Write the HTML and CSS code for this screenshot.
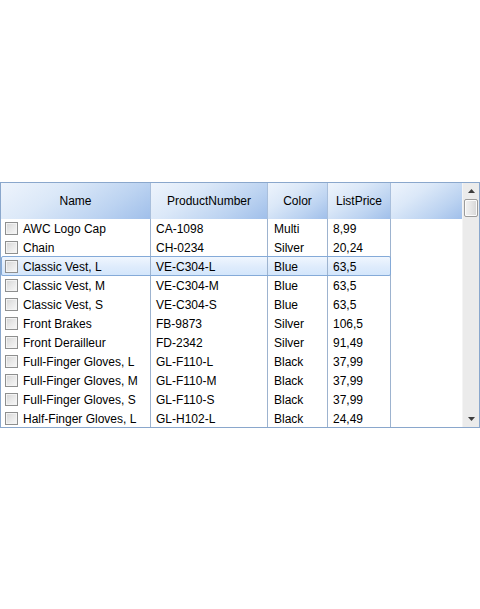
FILE: index.html
```html
<!DOCTYPE html>
<html>
<head>
<meta charset="utf-8">
<link rel="stylesheet" href="styles.css">
</head>
<body>
<div class="grid">
  <div class="main">
    <div class="header">
      <div class="hcell c1">Name</div>
      <div class="hcell c2">ProductNumber</div>
      <div class="hcell c3">Color</div>
      <div class="hcell c4">ListPrice</div>
      <div class="hcell hfill"></div>
    </div>
    <div class="body">
      <div class="rows">
        <div class="row"><div class="cell c1"><span class="cb"></span>AWC Logo Cap</div><div class="cell c2">CA-1098</div><div class="cell c3">Multi</div><div class="cell c4">8,99</div></div>
        <div class="row"><div class="cell c1"><span class="cb"></span>Chain</div><div class="cell c2">CH-0234</div><div class="cell c3">Silver</div><div class="cell c4">20,24</div></div>
        <div class="row sel"><div class="cell c1"><span class="cb"></span>Classic Vest, L</div><div class="cell c2">VE-C304-L</div><div class="cell c3">Blue</div><div class="cell c4">63,5</div></div>
        <div class="row"><div class="cell c1"><span class="cb"></span>Classic Vest, M</div><div class="cell c2">VE-C304-M</div><div class="cell c3">Blue</div><div class="cell c4">63,5</div></div>
        <div class="row"><div class="cell c1"><span class="cb"></span>Classic Vest, S</div><div class="cell c2">VE-C304-S</div><div class="cell c3">Blue</div><div class="cell c4">63,5</div></div>
        <div class="row"><div class="cell c1"><span class="cb"></span>Front Brakes</div><div class="cell c2">FB-9873</div><div class="cell c3">Silver</div><div class="cell c4">106,5</div></div>
        <div class="row"><div class="cell c1"><span class="cb"></span>Front Derailleur</div><div class="cell c2">FD-2342</div><div class="cell c3">Silver</div><div class="cell c4">91,49</div></div>
        <div class="row"><div class="cell c1"><span class="cb"></span>Full-Finger Gloves, L</div><div class="cell c2">GL-F110-L</div><div class="cell c3">Black</div><div class="cell c4">37,99</div></div>
        <div class="row"><div class="cell c1"><span class="cb"></span>Full-Finger Gloves, M</div><div class="cell c2">GL-F110-M</div><div class="cell c3">Black</div><div class="cell c4">37,99</div></div>
        <div class="row"><div class="cell c1"><span class="cb"></span>Full-Finger Gloves, S</div><div class="cell c2">GL-F110-S</div><div class="cell c3">Black</div><div class="cell c4">37,99</div></div>
        <div class="row"><div class="cell c1"><span class="cb"></span>Half-Finger Gloves, L</div><div class="cell c2">GL-H102-L</div><div class="cell c3">Black</div><div class="cell c4">24,49</div></div>
      </div>
      <div class="bfill"></div>
    </div>
  </div>
  <div class="scroll">
    <div class="sbtn"><svg width="7" height="4" viewBox="0 0 7 4"><path d="M0 4 L3.5 0 L7 4 Z" fill="#3c3c3c"/></svg></div>
    <div class="track"><div class="thumb"></div></div>
    <div class="sbtn"><svg width="7" height="4" viewBox="0 0 7 4"><path d="M0 0 L7 0 L3.5 4 Z" fill="#3c3c3c"/></svg></div>
  </div>
</div>
</body>
</html>
```
FILE: styles.css
```css
html, body {
  margin: 0;
  padding: 0;
  background: #ffffff;
}
body {
  padding-top: 182px;
  font-family: "Liberation Sans", Arial, sans-serif;
  font-size: 12px;
  color: #000000;
}
.grid {
  width: 480px;
  height: 246px;
  box-sizing: border-box;
  border: 1px solid #8aa7cc;
  display: flex;
  overflow: hidden;
}
.main {
  flex: 1;
  display: flex;
  flex-direction: column;
  min-width: 0;
}
.header {
  display: flex;
  height: 36px;
  flex: none;
}
.hcell {
  box-sizing: border-box;
  border-right: 1px solid #a9bfdc;
  background: linear-gradient(145deg, #eef4fc 0%, #dbe8f8 35%, #bcd3f1 72%, #a0bfea 100%);
  display: flex;
  align-items: center;
  justify-content: center;
  padding-bottom: 1px;
}
.hfill {
  flex: 1;
  border-right: none;
}
.c1 { width: 150px; }
.c2 { width: 117px; }
.c3 { width: 60px; }
.c4 { width: 63px; }
.body {
  flex: 1;
  display: flex;
  overflow: hidden;
}
.rows {
  width: 390px;
  flex: none;
}
.bfill {
  flex: 1;
  background: #ffffff;
}
.row {
  display: flex;
  height: 19px;
  position: relative;
}
.cell {
  box-sizing: border-box;
  border-right: 1px solid #9db3cf;
  display: flex;
  align-items: center;
  padding-left: 5px;
  white-space: nowrap;
  overflow: hidden;
  position: relative;
  z-index: 1;
}
.cell.c1 { padding-left: 4px; }
.cell.c3 { padding-left: 6px; }
.cb {
  width: 13px;
  height: 13px;
  box-sizing: border-box;
  border: 1px solid #8e8f8f;
  background: linear-gradient(135deg, #d4d4d4 0%, #e8e8e8 50%, #f8f8f8 100%);
  box-shadow: inset 0 0 0 1px #f3f3f3;
  margin-right: 5px;
  flex: none;
}
.row.sel {
  background: linear-gradient(to bottom, #f0f6fe 0%, #dfecfc 50%, #d2e5fb 100%);
}
.row.sel::after {
  content: "";
  position: absolute;
  left: 0;
  top: -1px;
  right: 0;
  bottom: 0;
  border: 1px solid #84aad8;
  border-radius: 2px;
  z-index: 2;
  pointer-events: none;
}
.scroll {
  width: 17px;
  flex: none;
  display: flex;
  flex-direction: column;
  background: #ebebeb;
  border-left: 1px solid #f4f4f4;
  box-sizing: border-box;
}
.sbtn {
  height: 16px;
  flex: none;
  display: flex;
  align-items: center;
  justify-content: center;
}
.track {
  flex: 1;
  padding: 0 1px;
}
.thumb {
  height: 18px;
  box-sizing: border-box;
  border: 1px solid #9b9b9b;
  border-radius: 2px;
  background: linear-gradient(to right, #f2f2f2 0%, #e6e6e6 50%, #d6d6d6 100%);
  box-shadow: inset 0 0 0 1px #fbfbfb;
}
```
